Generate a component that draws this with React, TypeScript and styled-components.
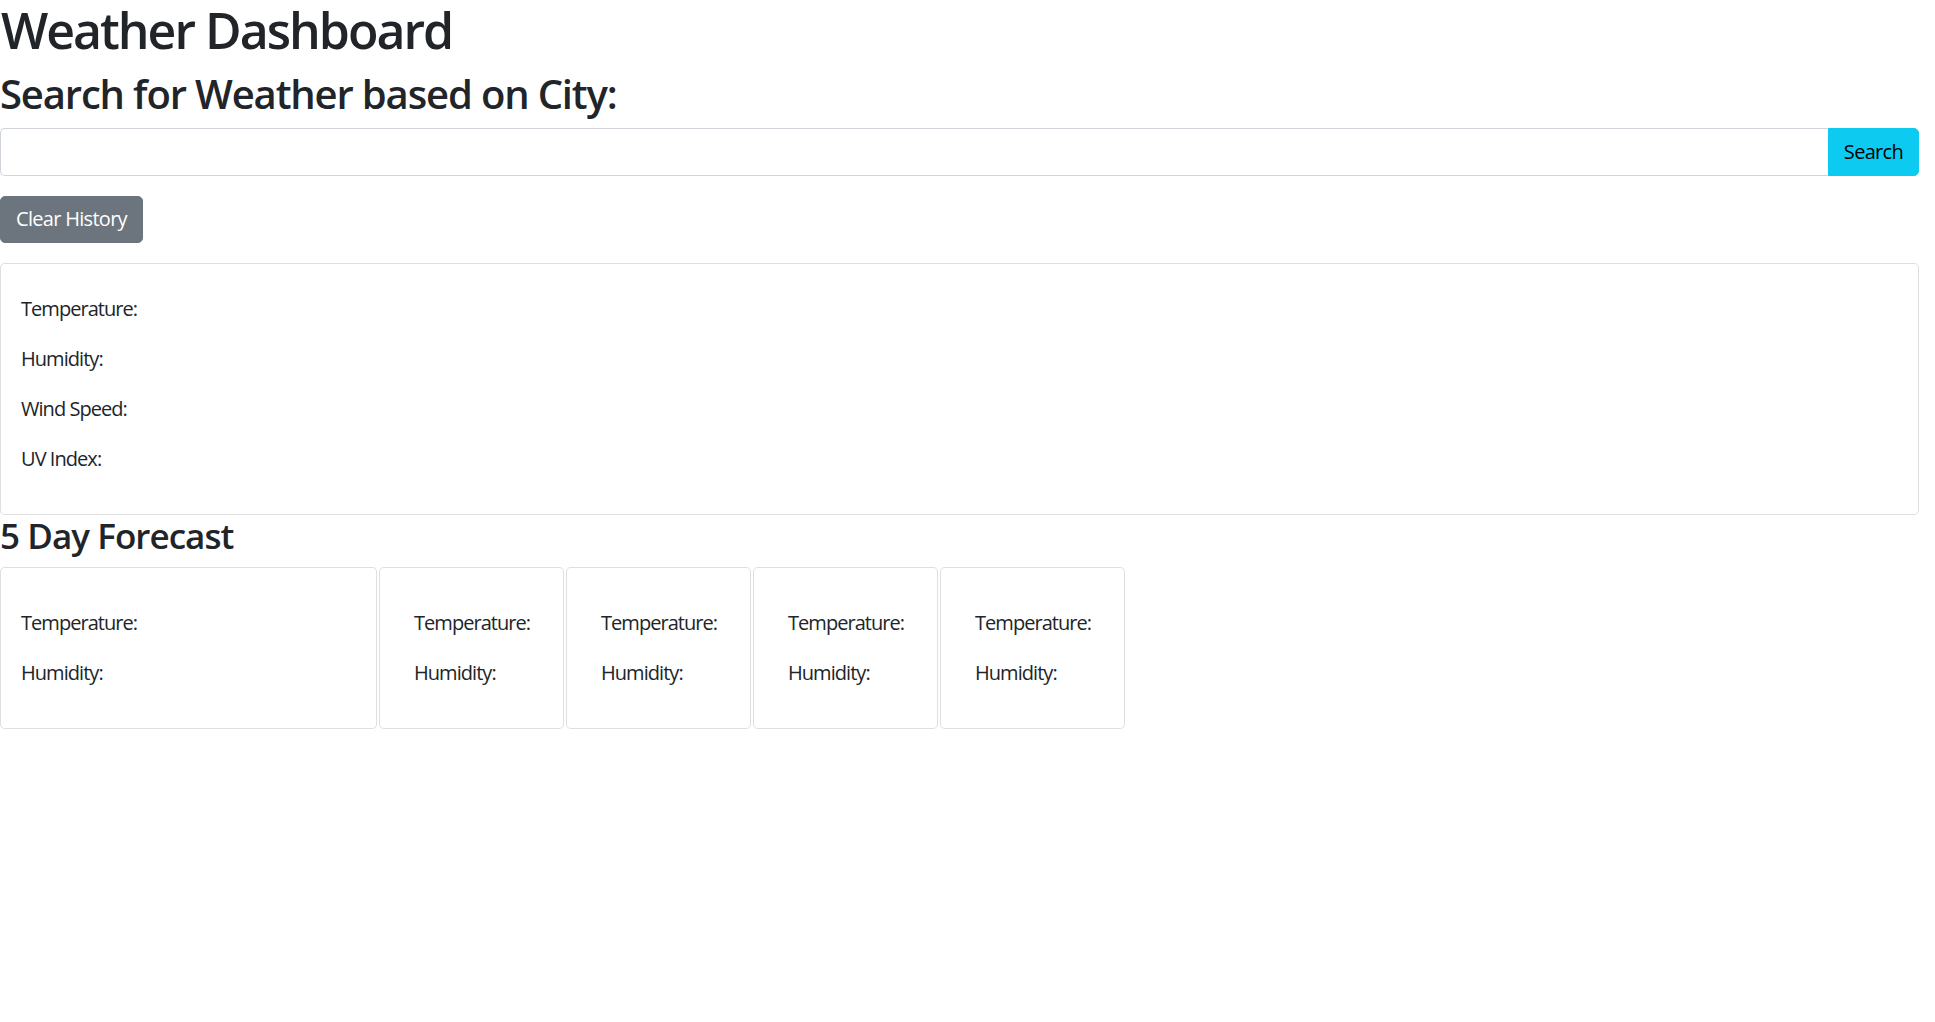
import React, { useState } from 'react';
import styled, { createGlobalStyle } from 'styled-components';

const GlobalStyle = createGlobalStyle`
  *, *::before, *::after {
    box-sizing: border-box;
  }

  body {
    margin: 0;
    background: #ffffff;
    color: #212529;
    font-family: 'Open Sans', 'Noto Sans', sans-serif;
    font-size: 20px;
    line-height: 30px;
    letter-spacing: -0.95px;
  }
`;

interface IForecastDay {
  key: string;
  wide?: boolean;
}

const currentFields = ['Temperature:', 'Humidity:', 'Wind Speed:', 'UV Index:'];
const forecastFields = ['Temperature:', 'Humidity:'];

const forecastDays: IForecastDay[] = [
  { key: 'day-1', wide: true },
  { key: 'day-2' },
  { key: 'day-3' },
  { key: 'day-4' },
  { key: 'day-5' },
];

export default function App() {
  const [city, setCity] = useState('');

  return (
    <Page>
      <GlobalStyle />
      <Title>Weather Dashboard</Title>
      <SubTitle>Search for Weather based on City:</SubTitle>

      <InputGroup>
        <CityInput
          type="text"
          value={city}
          onChange={e => setCity(e.target.value)}
        />
        <SearchButton type="button">Search</SearchButton>
      </InputGroup>

      <ClearButton type="button">Clear History</ClearButton>

      <Card>
        <CardBody>
          <CardSpacer />
          {currentFields.map(field => (
            <CardText key={field}>{field}</CardText>
          ))}
        </CardBody>
      </Card>

      <SectionTitle>5 Day Forecast</SectionTitle>
      <ForecastRow>
        {forecastDays.map(day => (
          <ForecastCard key={day.key} $wide={day.wide}>
            <ForecastBody $wide={day.wide}>
              <ForecastSpacer />
              {forecastFields.map(field => (
                <CardText key={field}>{field}</CardText>
              ))}
            </ForecastBody>
          </ForecastCard>
        ))}
      </ForecastRow>
    </Page>
  );
}

const Page = styled.div`
  padding-right: 16px;
`;

const Title = styled.h1`
  margin: 0 0 10px;
  padding-left: 1px;
  font-size: 50px;
  font-weight: 600;
  line-height: 60px;
  letter-spacing: -2px;
`;

const SubTitle = styled.h2`
  margin: 0 0 10px;
  font-size: 40px;
  font-weight: 600;
  line-height: 48px;
  letter-spacing: -1.15px;
`;

const SectionTitle = styled.h3`
  margin: 0 0 10px;
  font-size: 35px;
  font-weight: 600;
  line-height: 42px;
  letter-spacing: -0.95px;
`;

const InputGroup = styled.div`
  display: flex;
  align-items: stretch;
  margin-bottom: 20px;
`;

const CityInput = styled.input`
  flex: 1 1 auto;
  min-width: 0;
  height: 47.5px;
  padding: 7.5px 15px;
  border: 1px solid #ced4da;
  border-right: none;
  border-radius: 5px 0 0 5px;
  font-family: inherit;
  font-size: 20px;
  color: #212529;
  outline: none;
`;

const BaseButton = styled.button`
  height: 47.5px;
  padding: 7.5px 15px;
  border: 1px solid transparent;
  font-family: inherit;
  font-size: 20px;
  line-height: 30px;
  letter-spacing: -0.7px;
  cursor: pointer;
`;

const SearchButton = styled(BaseButton)`
  background: #0dcaf0;
  border-color: #0dcaf0;
  color: #000000;
  border-radius: 0 5px 5px 0;
`;

const ClearButton = styled(BaseButton)`
  display: block;
  margin-bottom: 20px;
  background: #6c757d;
  border-color: #6c757d;
  color: #ffffff;
  border-radius: 5px;
`;

const Card = styled.div`
  border: 1px solid rgba(0, 0, 0, 0.125);
  border-radius: 5px;
  background: #ffffff;
`;

const CardBody = styled.div`
  padding: 20px;
`;

const CardSpacer = styled.div`
  height: 10px;
`;

const CardText = styled.p`
  margin: 0 0 20px;
  white-space: nowrap;
`;

const ForecastRow = styled.div`
  display: flex;
  gap: 2px;
`;

const ForecastCard = styled(Card)<{ $wide?: boolean }>`
  width: ${p => (p.$wide ? '377px' : '185px')};
  flex: none;
`;

const ForecastBody = styled.div<{ $wide?: boolean }>`
  padding: ${p => (p.$wide ? '20px' : '20px 34px')};
`;

const ForecastSpacer = styled.div`
  height: 20px;
`;
